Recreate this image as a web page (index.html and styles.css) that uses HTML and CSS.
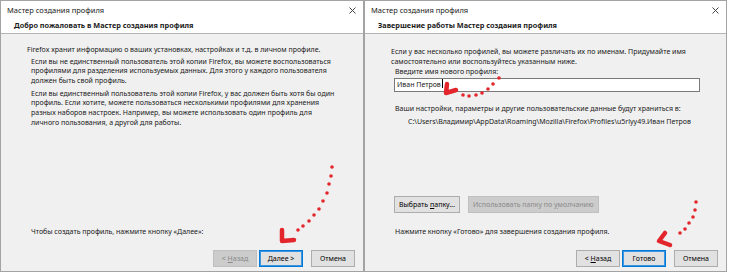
FILE: index.html
```html
<!DOCTYPE html>
<html lang="ru">
<head>
    <meta charset="UTF-8">
    <title>Мастер создания профиля</title>
    <link rel="stylesheet" href="styles.css">
</head>
<body>
<div class="screen">
    <section class="wizard">
        <div class="titlebar">
            <span>Мастер создания профиля</span>
            <svg class="close" width="7" height="7" viewBox="0 0 7 7"><path d="M0.5 0.5 L6.5 6.5 M6.5 0.5 L0.5 6.5"/></svg>
        </div>
        <div class="banner">Добро пожаловать в Мастер создания профиля</div>
        <div class="page">
            <div class="body">
                <p class="lead">Firefox хранит информацию о ваших установках, настройках и т.д. в личном профиле.</p>
                <p class="para">Если вы не единственный пользователь этой копии Firefox, вы можете воспользоваться<br>профилями для разделения используемых данных. Для этого у каждого пользователя<br>должен быть свой профиль.</p>
                <p class="para">Если вы единственный пользователь этой копии Firefox, у вас должен быть хотя бы один<br>профиль. Если хотите, можете пользоваться несколькими профилями для хранения<br>разных наборов настроек. Например, вы можете использовать один профиль для<br>личного пользования, а другой для работы.</p>
            </div>
            <p class="hint">Чтобы создать профиль, нажмите кнопку «Далее»:</p>
            <div class="actions">
                <button class="btn" disabled>&lt; <u>Н</u>азад</button>
                <button class="btn default">Далее &gt;</button>
                <button class="btn cancel">Отмена</button>
            </div>
        </div>
    </section>

    <section class="wizard">
        <div class="titlebar">
            <span>Мастер создания профиля</span>
            <svg class="close" width="7" height="7" viewBox="0 0 7 7"><path d="M0.5 0.5 L6.5 6.5 M6.5 0.5 L0.5 6.5"/></svg>
        </div>
        <div class="banner">Завершение работы Мастер создания профиля</div>
        <div class="page">
            <div class="body finish">
                <p class="intro">Если у вас несколько профилей, вы можете различать их по именам. Придумайте имя<br>самостоятельно или воспользуйтесь указанным ниже.</p>
                <label class="field-label" for="profile-name">Введите имя нового профиля:</label>
                <div class="field" id="profile-name">Иван Петров<span class="caret"></span></div>
                <p class="store">Ваши настройки, параметры и другие пользовательские данные будут храниться в:</p>
                <p class="path">C:\Users\Владимир\AppData\Roaming\Mozilla\Firefox\Profiles\u5rlyy49.Иван Петров</p>
                <div class="folder-buttons">
                    <button class="btn">Выбрать <u>п</u>апку...</button>
                    <button class="btn" disabled>Использовать папку по <u>у</u>молчанию</button>
                </div>
            </div>
            <p class="hint">Нажмите кнопку «Готово» для завершения создания профиля.</p>
            <div class="actions">
                <button class="btn">&lt; <u>Н</u>азад</button>
                <button class="btn default">Готово</button>
                <button class="btn cancel">Отмена</button>
            </div>
        </div>
    </section>

    <svg class="arrows" width="730" height="274" viewBox="0 0 730 274">
        <g class="dots">
            <circle cx="332" cy="167" r="1.8"/>
            <circle cx="331" cy="176" r="1.8"/>
            <circle cx="329" cy="184" r="1.8"/>
            <circle cx="327" cy="193" r="1.8"/>
            <circle cx="323" cy="201" r="1.8"/>
            <circle cx="319" cy="209" r="1.8"/>
            <circle cx="314" cy="215" r="1.8"/>
            <circle cx="309" cy="221" r="1.8"/>
            <circle cx="303" cy="226" r="1.8"/>
            <circle cx="298" cy="230" r="1.8"/>

            <circle cx="696" cy="202" r="1.8"/>
            <circle cx="695" cy="210" r="1.8"/>
            <circle cx="693" cy="217" r="1.8"/>
            <circle cx="689" cy="223" r="1.8"/>
            <circle cx="685" cy="229" r="1.8"/>
            <circle cx="680" cy="233" r="1.8"/>

            <circle cx="499" cy="78" r="1.8"/>
            <circle cx="493" cy="84" r="1.8"/>
            <circle cx="488" cy="89" r="1.8"/>
            <circle cx="482" cy="93" r="1.8"/>
            <circle cx="476" cy="95" r="1.8"/>
            <circle cx="469" cy="96" r="1.8"/>
            <circle cx="463" cy="95" r="1.8"/>
        </g>
        <g class="heads">
            <path d="M282 230 L282 241 L294 240"/>
            <path d="M665 233 L659 241 L670 245"/>
            <path d="M447 84 L446 93 L456 90"/>
        </g>
    </svg>
</div>
</body>
</html>
```

FILE: styles.css
```css
* {
    box-sizing: border-box;
}
body {
    margin: 0;
    background: #fff;
    font-family: "Noto Sans", "Liberation Sans", sans-serif;
    font-size: 7px;
    color: #1a1a1a;
    white-space: nowrap;
}
.screen {
    position: relative;
    display: flex;
    width: 730px;
    height: 274px;
}
.wizard {
    width: 364px;
    height: 272px;
    border: 1px solid #a3a3a3;
    background: #f0f0f0;
    display: flex;
    flex-direction: column;
}
.wizard + .wizard {
    width: 363px;
}
.titlebar {
    height: 18px;
    background: #fff;
    display: flex;
    align-items: center;
    justify-content: space-between;
    padding: 0 7px 0 6px;
    font-size: 7.5px;
}
.close path {
    stroke: #444;
    stroke-width: 1;
    fill: none;
}
.banner {
    height: 15px;
    line-height: 13px;
    background: #fff;
    border-bottom: 1px solid #b4b4b4;
    padding-left: 13px;
    font-size: 7.3px;
    font-weight: bold;
}
.page {
    flex: 1;
    display: flex;
    flex-direction: column;
    padding: 0 8px 4px 0;
}
p {
    margin: 0;
}
.body {
    flex: 1;
    padding-top: 11px;
    line-height: 9.6px;
}
.lead {
    padding-left: 26px;
    margin-bottom: 2px;
}
.para {
    padding-left: 30px;
    margin-bottom: 3.5px;
}
.finish {
    padding: 13px 0 0 26px;
}
.field-label {
    display: block;
    padding-left: 4px;
    margin-top: 1px;
}
.field {
    margin: 1px 0 0 3px;
    width: 306px;
    height: 14px;
    line-height: 12px;
    padding-left: 2px;
    background: #fff;
    border: 1px solid #7a7a7a;
}
.caret {
    display: inline-block;
    width: 1px;
    height: 9px;
    margin-left: 1px;
    vertical-align: -1px;
    background: #000;
}
.store {
    margin-top: 12px;
    padding-left: 4px;
}
.path {
    margin-top: 4px;
    padding-left: 17px;
}
.folder-buttons {
    display: flex;
    gap: 8px;
    margin-top: 69px;
    padding-left: 3px;
}
.folder-buttons .btn {
    padding: 0 4px;
}
.hint {
    line-height: 10px;
    padding-left: 30px;
    margin-bottom: 13px;
}
.actions {
    display: flex;
    justify-content: flex-end;
    gap: 2px;
}
.btn {
    height: 17px;
    min-width: 44px;
    padding: 0 6px;
    font: inherit;
    color: #000;
    background: #e1e1e1;
    border: 1px solid #adadad;
}
.btn:disabled {
    color: #8a8a8a;
    background: #cccccc;
    border-color: #bfbfbf;
}
.default {
    border-color: #0078d7;
    box-shadow: inset 0 0 0 1px #3d96e0;
}
.cancel {
    margin-left: 6px;
}
.arrows {
    position: absolute;
    left: 0;
    top: 0;
    pointer-events: none;
}
.dots circle {
    fill: #e3262b;
}
.heads path {
    fill: none;
    stroke: #e3262b;
    stroke-width: 4.5;
    stroke-linecap: round;
    stroke-linejoin: round;
}
```
